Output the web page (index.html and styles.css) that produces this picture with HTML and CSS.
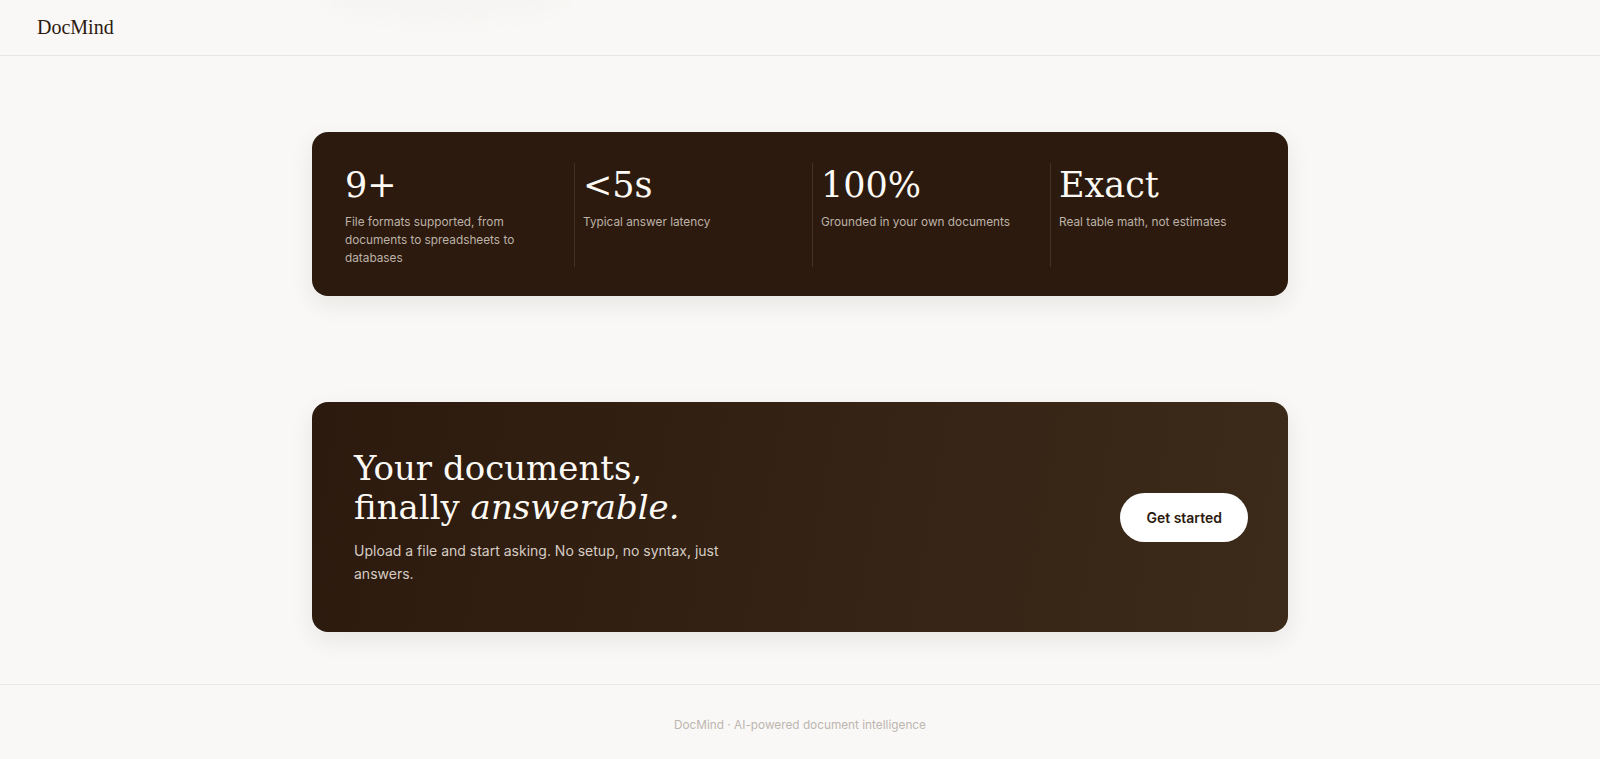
FILE: index.html
```html
<!DOCTYPE html>
<html lang="en">
<head>
    <meta charset="UTF-8">
    <meta name="viewport" content="width=device-width, initial-scale=1.0">
    <title>DocMind</title>
    <link rel="stylesheet" href="styles.css">
</head>
<body>
    <header class="site-header">
        <div class="glow"></div>
        <a class="logo" href="#">DocMind</a>
    </header>

    <main>
        <section class="stats-section">
            <div class="stats-card">
                <div class="stat">
                    <div class="stat-value">9+</div>
                    <div class="stat-label">File formats supported, from documents to spreadsheets to databases</div>
                </div>
                <div class="stat">
                    <div class="stat-value">&lt;5s</div>
                    <div class="stat-label">Typical answer latency</div>
                </div>
                <div class="stat">
                    <div class="stat-value">100%</div>
                    <div class="stat-label">Grounded in your own documents</div>
                </div>
                <div class="stat">
                    <div class="stat-value">Exact</div>
                    <div class="stat-label">Real table math, not estimates</div>
                </div>
            </div>
        </section>

        <section class="cta-section">
            <div class="cta-card">
                <div class="cta-text">
                    <h2>Your documents,<br>finally <em>answerable.</em></h2>
                    <p>Upload a file and start asking. No setup, no syntax, just answers.</p>
                </div>
                <a class="cta-button" href="#">Get started</a>
            </div>
        </section>
    </main>

    <footer class="site-footer">
        DocMind · AI-powered document intelligence
    </footer>
</body>
</html>
```

FILE: styles.css
```css
body {
    margin: 0;
    font-family: Inter, "Noto Sans", sans-serif;
    background: #f9f8f6;
    color: #2c1a0e;
}

.site-header {
    position: relative;
    height: 55px;
    display: flex;
    align-items: center;
    padding: 0 37px;
    border-bottom: 1px solid #e9e6e2;
    overflow: hidden;
}

/* faint light patch near the top edge */
.glow {
    position: absolute;
    top: -28px;
    left: 325px;
    width: 240px;
    height: 50px;
    border-radius: 50%;
    background: #f6f5f3;
    filter: blur(6px);
}

.logo {
    position: relative;
    font-family: "Liberation Serif", serif;
    font-size: 20px;
    color: #2c1a0e;
    text-decoration: none;
}

.stats-section {
    padding: 76px 0 53px;
}

.stats-card {
    width: 976px;
    margin: 0 auto;
    box-sizing: border-box;
    padding: 31px 24px 29px;
    background: #2c1a0e;
    border-radius: 16px;
    box-shadow: 0 8px 24px rgba(44, 26, 14, 0.08);
    display: grid;
    grid-template-columns: repeat(4, 1fr);
    gap: 24px;
}

.stat {
    padding-left: 8px;
    border-left: 1px solid rgba(255, 255, 255, 0.1);
}

.stat:first-child {
    border-left-color: transparent;
}

.stat-value {
    font-family: "DejaVu Serif", serif;
    font-size: 35px;
    line-height: 44px;
    color: #fdfaf5;
}

.stat-label {
    margin-top: 6px;
    font-size: 11.8px;
    line-height: 18px;
    color: #bdb2a8;
}

.cta-section {
    padding: 53px 0 52px;
}

.cta-card {
    width: 976px;
    margin: 0 auto;
    box-sizing: border-box;
    min-height: 230px;
    padding: 40px 40px 40px 42px;
    border-radius: 16px;
    background: linear-gradient(100deg, #2c1a0e 0%, #3c2a1a 100%);
    box-shadow: 0 8px 24px rgba(44, 26, 14, 0.08);
    display: flex;
    align-items: center;
    justify-content: space-between;
}

.cta-text h2 {
    margin: 0;
    font-family: "DejaVu Serif", serif;
    font-weight: normal;
    font-size: 34px;
    line-height: 39px;
    color: #fdfaf5;
}

.cta-text em {
    font-style: italic;
}

.cta-text p {
    margin: 12px 0 0;
    max-width: 400px;
    font-size: 14px;
    line-height: 23px;
    color: #d6ccc3;
}

.cta-button {
    display: inline-block;
    padding: 16px 26px;
    border-radius: 999px;
    background: #ffffff;
    color: #2c1a0e;
    font-size: 14px;
    font-weight: 600;
    text-decoration: none;
}

.site-footer {
    padding: 31px 0 32px;
    border-top: 1px solid #edeae6;
    text-align: center;
    font-size: 11.8px;
    line-height: 18px;
    color: #bdb6b0;
}
```
